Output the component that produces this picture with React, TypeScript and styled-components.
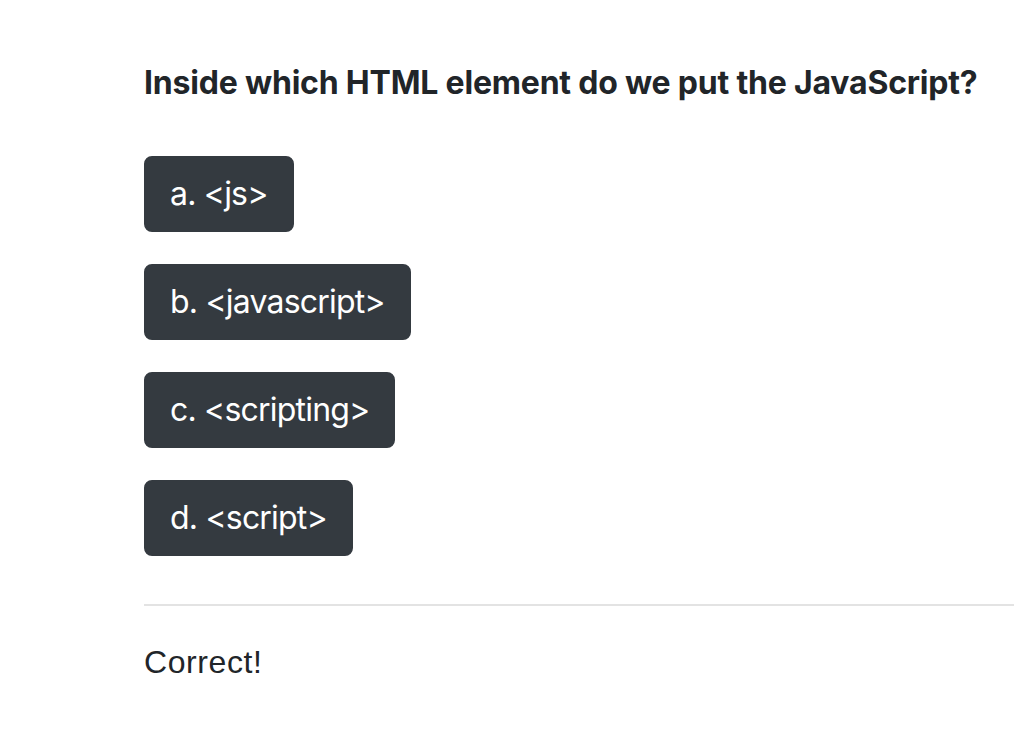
import React from "react";
import styled, { createGlobalStyle } from "styled-components";

const GlobalStyle = createGlobalStyle`
    html, body {
        margin: 0;
        padding: 0;
        background: #fff;
    }
`;

const Page = styled.div`
    padding: 64px 0 40px 144px;
`;

const Question = styled.h2`
    margin: 0 0 54px;
    font-family: "Inter", "Liberation Sans", sans-serif;
    font-size: 32px;
    line-height: 38px;
    font-weight: 700;
    letter-spacing: -0.2px;
    color: #212529;
`;

const Choices = styled.div`
    display: flex;
    flex-direction: column;
    align-items: flex-start;
    gap: 32px;
`;

const ChoiceButton = styled.button`
    padding: 12px 24px;
    border: 2px solid #343a40;
    border-radius: 8px;
    background: #343a40;
    color: #fff;
    font-family: "Inter", "Liberation Sans", sans-serif;
    font-size: 32px;
    line-height: 48px;
    font-weight: 400;
    letter-spacing: -0.8px;
    cursor: pointer;
`;

const Divider = styled.hr`
    margin: 48px 0 32px;
    border: 0;
    border-top: 2px solid #e3e3e3;
`;

const Result = styled.p`
    margin: 0;
    font-family: "Liberation Sans", Arial, sans-serif;
    font-size: 32px;
    line-height: 48px;
    letter-spacing: 0.6px;
    color: #212529;
`;

const choices = ["a. <js>", "b. <javascript>", "c. <scripting>", "d. <script>"];

const App = () => {
    return (
        <>
            <GlobalStyle />
            <Page>
                <Question>Inside which HTML element do we put the JavaScript?</Question>
                <Choices>
                    {choices.map((c) => (
                        <ChoiceButton key={c}>{c}</ChoiceButton>
                    ))}
                </Choices>
                <Divider />
                <Result>Correct!</Result>
            </Page>
        </>
    );
};

export default App;
